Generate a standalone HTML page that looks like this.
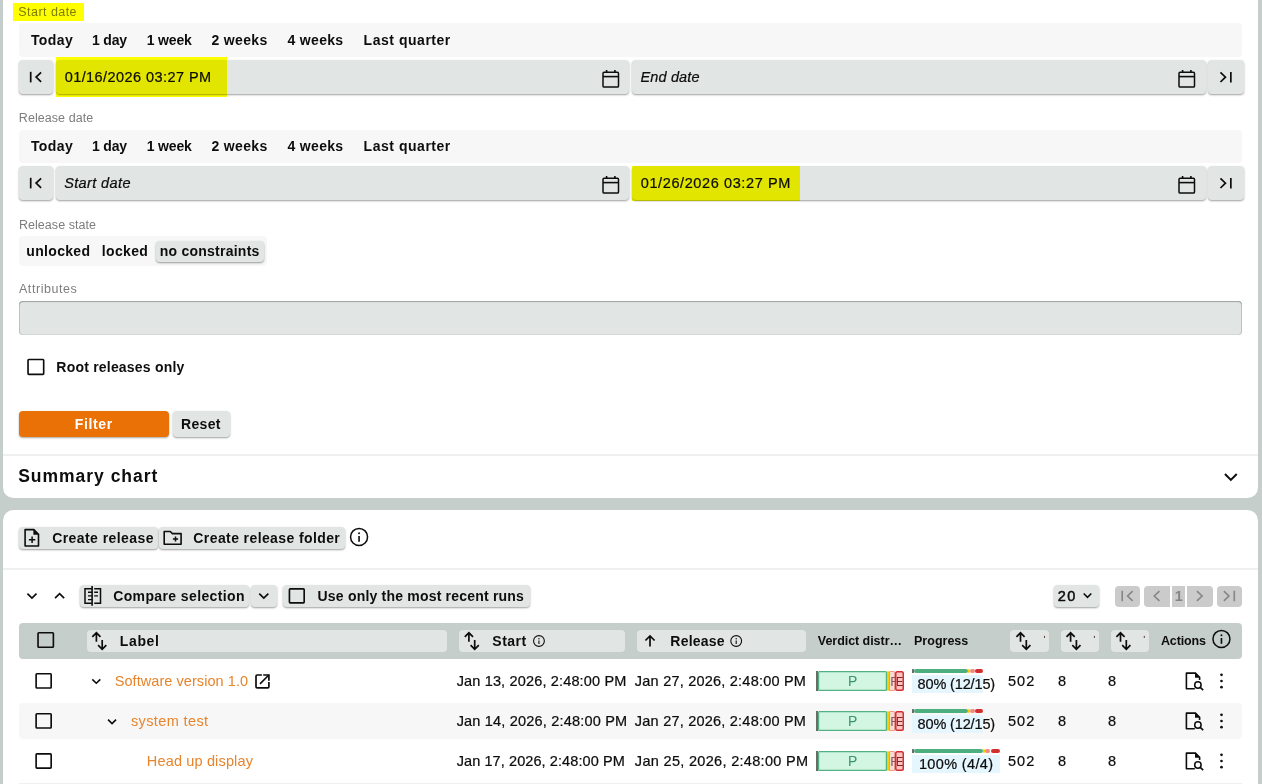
<!DOCTYPE html>
<html lang="en"><head><meta charset="utf-8"><title>Releases</title>
<style>
html,body{margin:0;padding:0}
body{width:1262px;height:784px;overflow:hidden;background:#c5cecb;font-family:"Liberation Sans", sans-serif;color:#0d0d0d;position:relative}
#root{position:absolute;left:0;top:0;width:1262px;height:784px;overflow:hidden}
#root div{position:absolute;box-sizing:border-box}
.card{background:#fff}
.tabbar{background:#f7f7f7;border-radius:4px}
.ctl{background:#e1e5e4;border-radius:4px;box-shadow:0 1px 2px rgba(0,0,0,.38)}
.cb{border:1.9px solid #0d0d0d;border-radius:2px;background:transparent}
#root .hl{background:#ffff00;mix-blend-mode:multiply}
.t{position:absolute;white-space:pre;line-height:1;font-family:"Liberation Sans", sans-serif}
svg{position:absolute;overflow:visible}
</style></head>
<body><div id="root">
<div class="card" style="left:3px;top:-20px;width:1255.00px;height:518.00px;border-radius:0 0 10.5px 10.5px"></div>
<div class="card" style="left:3px;top:510px;width:1255.00px;height:390.00px;border-radius:10.5px 10.5px 0 0"></div>
<div class="tabbar" style="left:19px;top:23px;width:1223.00px;height:34.00px;"></div>
<div class="ctl" style="left:19px;top:60.2px;width:34.30px;height:33.80px;"></div>
<div class="ctl" style="left:56px;top:60.2px;width:573.20px;height:33.80px;"></div>
<div class="ctl" style="left:632.2px;top:60.2px;width:573.60px;height:33.80px;"></div>
<div class="ctl" style="left:1208.3px;top:60.2px;width:35.40px;height:33.80px;"></div>
<div class="tabbar" style="left:19px;top:130px;width:1223.00px;height:33.00px;"></div>
<div class="ctl" style="left:19px;top:166.2px;width:34.30px;height:33.80px;"></div>
<div class="ctl" style="left:56px;top:166.2px;width:573.20px;height:33.80px;"></div>
<div class="ctl" style="left:632.2px;top:166.2px;width:573.60px;height:33.80px;"></div>
<div class="ctl" style="left:1208.3px;top:166.2px;width:35.40px;height:33.80px;"></div>
<div class="tabbar" style="left:19px;top:236px;width:248.00px;height:30.00px;"></div>
<div class="ctl" style="left:156px;top:240.5px;width:107.60px;height:21.60px;"></div>
<div class="" style="left:19px;top:301px;width:1223.00px;height:34.00px;background:#e1e5e4;border-radius:4px;box-shadow:inset 0 1px 1px rgba(0,0,0,.30), inset 1px 0 0 rgba(0,0,0,.13), inset -1px 0 0 rgba(0,0,0,.13), inset 0 -1px 0 rgba(0,0,0,.06)"></div>
<div class="" style="left:19px;top:411px;width:150.00px;height:26.00px;background:#ea7105;border-radius:4px;box-shadow:0 1px 2px rgba(0,0,0,.35)"></div>
<div class="ctl" style="left:172.6px;top:411px;width:57.00px;height:26.00px;"></div>
<div class="" style="left:3px;top:454.1px;width:1255.00px;height:1.50px;background:#edf0ef"></div>
<div class="" style="left:3px;top:568.1px;width:1255.00px;height:1.50px;background:#edf0ef"></div>
<div class="ctl" style="left:18.7px;top:527.3px;width:139.50px;height:22.00px;"></div>
<div class="ctl" style="left:159.3px;top:527.3px;width:186.20px;height:22.00px;"></div>
<div class="ctl" style="left:79.7px;top:585.2px;width:169.30px;height:22.00px;"></div>
<div class="ctl" style="left:250.7px;top:585.2px;width:26.30px;height:22.00px;"></div>
<div class="ctl" style="left:283.3px;top:585.2px;width:246.30px;height:22.00px;"></div>
<div class="ctl" style="left:1053.6px;top:585.2px;width:45.60px;height:21.80px;"></div>
<div class="" style="left:1115.2px;top:586.2px;width:24.70px;height:20.60px;background:#cbcbcb;border-radius:4px"></div>
<div class="" style="left:1144.3px;top:586.2px;width:25.50px;height:20.60px;background:#cbcbcb;border-radius:4px 0 0 4px"></div>
<div class="" style="left:1172.3px;top:586.2px;width:12.50px;height:20.60px;background:#cbcbcb;border-radius:0"></div>
<div class="" style="left:1187.3px;top:586.2px;width:25.50px;height:20.60px;background:#cbcbcb;border-radius:0 4px 4px 0"></div>
<div class="" style="left:1217.4px;top:586.2px;width:24.40px;height:20.60px;background:#cbcbcb;border-radius:4px"></div>
<div class="" style="left:19px;top:623px;width:1223.00px;height:36.00px;background:#c5cecb;border-radius:4px"></div>
<div class="" style="left:87px;top:630px;width:360.00px;height:22.00px;background:#e1e5e4;border-radius:4px"></div>
<div class="" style="left:459px;top:630px;width:166.00px;height:22.00px;background:#e1e5e4;border-radius:4px"></div>
<div class="" style="left:637px;top:630px;width:169.00px;height:22.00px;background:#e1e5e4;border-radius:4px"></div>
<div class="" style="left:1010px;top:630px;width:39.20px;height:22.00px;background:#e1e5e4;border-radius:4px"></div>
<div class="" style="left:1060.8px;top:630px;width:38.20px;height:22.00px;background:#e1e5e4;border-radius:4px"></div>
<div class="" style="left:1111px;top:630px;width:38.00px;height:22.00px;background:#e1e5e4;border-radius:4px"></div>
<div class="" style="left:19px;top:703px;width:1223.00px;height:36.00px;background:#f7f7f7;border-radius:4px"></div>
<div class="" style="left:19px;top:782.8px;width:1223.00px;height:1.20px;background:#f0f0f0"></div>
<div class="" style="left:816px;top:670.9px;width:2.20px;height:20.00px;background:#6a6a6a"></div>
<div class="" style="left:818.2px;top:670.9px;width:68.60px;height:20.00px;background:#d2f6e2;border-radius:1.5px;box-shadow:inset 0 0 0 1.2px #52b284"></div>
<div class="" style="left:887px;top:670.9px;width:2.20px;height:20.00px;background:#f7cf00;border-radius:1px"></div>
<div class="" style="left:889.3px;top:670.9px;width:5.50px;height:20.00px;background:#f5ddd6;border-radius:1.5px;box-shadow:inset 0 0 0 1px #f0978d;overflow:hidden"><span class="t" style="left:1.0px;top:3.8px;font-size:13px;color:#8a5560">F</span></div>
<div class="" style="left:894.7px;top:670.9px;width:9.20px;height:20.00px;background:#ffc6c6;border-radius:2.5px;box-shadow:inset 0 0 0 1.5px #d23030;overflow:hidden"><span class="t" style="left:1.6px;top:3.8px;font-size:13px;color:#8e1f1f;transform:scaleX(.84);transform-origin:0 0">E</span></div>
<div class="" style="left:912.3px;top:674.8px;width:70.90px;height:18.00px;background:#e5f6fe"></div>
<div class="" style="left:912.1px;top:669.1px;width:1.90px;height:3.70px;background:#6a6a6a;border-radius:.5px"></div>
<div class="" style="left:914.4px;top:669.1px;width:53.20px;height:3.70px;background:#4caf7d;border-radius:2px"></div>
<div class="" style="left:967.8px;top:669.1px;width:2.50px;height:3.70px;background:#f7d000;border-radius:1px"></div>
<div class="" style="left:970.1999999999999px;top:669.1px;width:4.70px;height:3.70px;background:#f08a80;border-radius:2px"></div>
<div class="" style="left:975.1px;top:669.1px;width:8.10px;height:3.70px;background:#d32f2f;border-radius:2px"></div>
<div class="" style="left:816px;top:710.9px;width:2.20px;height:20.00px;background:#6a6a6a"></div>
<div class="" style="left:818.2px;top:710.9px;width:68.60px;height:20.00px;background:#d2f6e2;border-radius:1.5px;box-shadow:inset 0 0 0 1.2px #52b284"></div>
<div class="" style="left:887px;top:710.9px;width:2.20px;height:20.00px;background:#f7cf00;border-radius:1px"></div>
<div class="" style="left:889.3px;top:710.9px;width:5.50px;height:20.00px;background:#f5ddd6;border-radius:1.5px;box-shadow:inset 0 0 0 1px #f0978d;overflow:hidden"><span class="t" style="left:1.0px;top:3.8px;font-size:13px;color:#8a5560">F</span></div>
<div class="" style="left:894.7px;top:710.9px;width:9.20px;height:20.00px;background:#ffc6c6;border-radius:2.5px;box-shadow:inset 0 0 0 1.5px #d23030;overflow:hidden"><span class="t" style="left:1.6px;top:3.8px;font-size:13px;color:#8e1f1f;transform:scaleX(.84);transform-origin:0 0">E</span></div>
<div class="" style="left:912.3px;top:714.8px;width:70.90px;height:18.00px;background:#e5f6fe"></div>
<div class="" style="left:912.1px;top:709.1px;width:1.90px;height:3.70px;background:#6a6a6a;border-radius:.5px"></div>
<div class="" style="left:914.4px;top:709.1px;width:53.20px;height:3.70px;background:#4caf7d;border-radius:2px"></div>
<div class="" style="left:967.8px;top:709.1px;width:2.50px;height:3.70px;background:#f7d000;border-radius:1px"></div>
<div class="" style="left:970.1999999999999px;top:709.1px;width:4.70px;height:3.70px;background:#f08a80;border-radius:2px"></div>
<div class="" style="left:975.1px;top:709.1px;width:8.10px;height:3.70px;background:#d32f2f;border-radius:2px"></div>
<div class="" style="left:816px;top:750.9px;width:2.20px;height:20.00px;background:#6a6a6a"></div>
<div class="" style="left:818.2px;top:750.9px;width:68.60px;height:20.00px;background:#d2f6e2;border-radius:1.5px;box-shadow:inset 0 0 0 1.2px #52b284"></div>
<div class="" style="left:887px;top:750.9px;width:2.20px;height:20.00px;background:#f7cf00;border-radius:1px"></div>
<div class="" style="left:889.3px;top:750.9px;width:5.50px;height:20.00px;background:#f5ddd6;border-radius:1.5px;box-shadow:inset 0 0 0 1px #f0978d;overflow:hidden"><span class="t" style="left:1.0px;top:3.8px;font-size:13px;color:#8a5560">F</span></div>
<div class="" style="left:894.7px;top:750.9px;width:9.20px;height:20.00px;background:#ffc6c6;border-radius:2.5px;box-shadow:inset 0 0 0 1.5px #d23030;overflow:hidden"><span class="t" style="left:1.6px;top:3.8px;font-size:13px;color:#8e1f1f;transform:scaleX(.84);transform-origin:0 0">E</span></div>
<div class="" style="left:912.3px;top:754.8px;width:87.70px;height:18.00px;background:#e5f6fe"></div>
<div class="" style="left:912.1px;top:749.1px;width:1.90px;height:3.70px;background:#6a6a6a;border-radius:.5px"></div>
<div class="" style="left:914.4px;top:749.1px;width:68.20px;height:3.70px;background:#4caf7d;border-radius:2px"></div>
<div class="" style="left:982.8px;top:749.1px;width:2.10px;height:3.70px;background:#f7d000;border-radius:1px"></div>
<div class="" style="left:984.8px;top:749.1px;width:5.60px;height:3.70px;background:#f08a80;border-radius:2px"></div>
<div class="" style="left:990.6px;top:749.1px;width:9.40px;height:3.70px;background:#d32f2f;border-radius:2px"></div>
<svg width="1262" height="784" viewBox="0 0 1262 784" style="left:0;top:0">
<path d="M30.7 71.8V82.39999999999999" fill="none" stroke="#0d0d0d" stroke-width="1.7" stroke-linecap="butt" stroke-linejoin="miter"/>
<path d="M41.1 72.3L36.1 77.1L41.1 81.89999999999999" fill="none" stroke="#0d0d0d" stroke-width="1.7" stroke-linecap="butt" stroke-linejoin="miter"/>
<path d="M1230.85 71.9V82.5" fill="none" stroke="#0d0d0d" stroke-width="1.7" stroke-linecap="butt" stroke-linejoin="miter"/>
<path d="M1220.4499999999998 72.4L1225.4499999999998 77.2L1220.4499999999998 82.0" fill="none" stroke="#0d0d0d" stroke-width="1.7" stroke-linecap="butt" stroke-linejoin="miter"/>
<rect x="603.0" y="72.3" width="15.5" height="14.8" rx="1.1" fill="none" stroke="#0d0d0d" stroke-width="1.5"/>
<path d="M603.0 76.6H618.5" fill="none" stroke="#0d0d0d" stroke-width="1.6" stroke-linecap="butt" stroke-linejoin="miter"/>
<path d="M606.6 70.1V72.4M614.9000000000001 70.1V72.4" fill="none" stroke="#0d0d0d" stroke-width="1.6" stroke-linecap="butt" stroke-linejoin="miter"/>
<rect x="1179.0" y="72.3" width="15.5" height="14.8" rx="1.1" fill="none" stroke="#0d0d0d" stroke-width="1.5"/>
<path d="M1179.0 76.6H1194.5" fill="none" stroke="#0d0d0d" stroke-width="1.6" stroke-linecap="butt" stroke-linejoin="miter"/>
<path d="M1182.6000000000001 70.1V72.4M1190.9 70.1V72.4" fill="none" stroke="#0d0d0d" stroke-width="1.6" stroke-linecap="butt" stroke-linejoin="miter"/>
<path d="M30.7 177.79999999999998V188.4" fill="none" stroke="#0d0d0d" stroke-width="1.7" stroke-linecap="butt" stroke-linejoin="miter"/>
<path d="M41.1 178.29999999999998L36.1 183.1L41.1 187.9" fill="none" stroke="#0d0d0d" stroke-width="1.7" stroke-linecap="butt" stroke-linejoin="miter"/>
<path d="M1230.85 177.89999999999998V188.5" fill="none" stroke="#0d0d0d" stroke-width="1.7" stroke-linecap="butt" stroke-linejoin="miter"/>
<path d="M1220.4499999999998 178.39999999999998L1225.4499999999998 183.2L1220.4499999999998 188.0" fill="none" stroke="#0d0d0d" stroke-width="1.7" stroke-linecap="butt" stroke-linejoin="miter"/>
<rect x="603.0" y="178.3" width="15.5" height="14.8" rx="1.1" fill="none" stroke="#0d0d0d" stroke-width="1.5"/>
<path d="M603.0 182.6H618.5" fill="none" stroke="#0d0d0d" stroke-width="1.6" stroke-linecap="butt" stroke-linejoin="miter"/>
<path d="M606.6 176.1V178.4M614.9000000000001 176.1V178.4" fill="none" stroke="#0d0d0d" stroke-width="1.6" stroke-linecap="butt" stroke-linejoin="miter"/>
<rect x="1179.0" y="178.3" width="15.5" height="14.8" rx="1.1" fill="none" stroke="#0d0d0d" stroke-width="1.5"/>
<path d="M1179.0 182.6H1194.5" fill="none" stroke="#0d0d0d" stroke-width="1.6" stroke-linecap="butt" stroke-linejoin="miter"/>
<path d="M1182.6000000000001 176.1V178.4M1190.9 176.1V178.4" fill="none" stroke="#0d0d0d" stroke-width="1.6" stroke-linecap="butt" stroke-linejoin="miter"/>
<path d="M1224.9499999999998 473.95L1230.85 479.84999999999997L1236.75 473.95" fill="none" stroke="#0d0d0d" stroke-width="2.0" stroke-linecap="butt" stroke-linejoin="miter"/>
<path d="M25.1 529.6H33.8L38.5 534.3V546H25.1Z" fill="none" stroke="#0d0d0d" stroke-width="1.6" stroke-linecap="butt" stroke-linejoin="round"/>
<path d="M33.4 528.9L39.2 534.7H33.4Z" fill="#0d0d0d"/>
<path d="M32.1 536.5V542.9M28.9 539.7H35.3" fill="none" stroke="#0d0d0d" stroke-width="1.5" stroke-linecap="butt" stroke-linejoin="miter"/>
<path d="M164.2 531.5H170.3L172.4 533.6H181.1V544.2H164.2Z" fill="none" stroke="#0d0d0d" stroke-width="1.6" stroke-linecap="butt" stroke-linejoin="round"/>
<path d="M175.5 536.4V541.6M172.9 539H178.1" fill="none" stroke="#0d0d0d" stroke-width="1.5" stroke-linecap="butt" stroke-linejoin="miter"/>
<circle cx="359.06" cy="536.9" r="8.5" fill="none" stroke="#0d0d0d" stroke-width="1.5"/>
<path d="M359.06 535.9783132530121V541.8156626506023" fill="none" stroke="#0d0d0d" stroke-width="1.6385542168674698" stroke-linecap="butt" stroke-linejoin="miter"/>
<circle cx="359.06" cy="533.3156626506023" r="0.97289156626506" fill="#0d0d0d" stroke="none" stroke-width="0"/>
<circle cx="1221.45" cy="638.9" r="8.5" fill="none" stroke="#0d0d0d" stroke-width="1.5"/>
<path d="M1221.45 637.9783132530121V643.8156626506023" fill="none" stroke="#0d0d0d" stroke-width="1.6385542168674698" stroke-linecap="butt" stroke-linejoin="miter"/>
<circle cx="1221.45" cy="635.3156626506023" r="0.97289156626506" fill="#0d0d0d" stroke="none" stroke-width="0"/>
<circle cx="538.95" cy="641.0" r="5.4" fill="none" stroke="#0d0d0d" stroke-width="1.1"/>
<path d="M538.95 640.4144578313253V644.122891566265" fill="none" stroke="#0d0d0d" stroke-width="1.1" stroke-linecap="butt" stroke-linejoin="miter"/>
<circle cx="538.95" cy="638.722891566265" r="0.7" fill="#0d0d0d" stroke="none" stroke-width="0"/>
<circle cx="736.2" cy="641.0" r="5.4" fill="none" stroke="#0d0d0d" stroke-width="1.1"/>
<path d="M736.2 640.4144578313253V644.122891566265" fill="none" stroke="#0d0d0d" stroke-width="1.1" stroke-linecap="butt" stroke-linejoin="miter"/>
<circle cx="736.2" cy="638.722891566265" r="0.7" fill="#0d0d0d" stroke="none" stroke-width="0"/>
<path d="M27.4 593.6L31.95 598.1L36.5 593.6" fill="none" stroke="#0d0d0d" stroke-width="1.7" stroke-linecap="butt" stroke-linejoin="miter"/>
<path d="M55.050000000000004 598.1L59.6 593.6L64.15 598.1" fill="none" stroke="#0d0d0d" stroke-width="1.7" stroke-linecap="butt" stroke-linejoin="miter"/>
<path d="M259.25 593.6L263.8 598.1L268.35 593.6" fill="none" stroke="#0d0d0d" stroke-width="1.7" stroke-linecap="butt" stroke-linejoin="miter"/>
<path d="M1083.7 593.5L1087.5 597.3L1091.3 593.5" fill="none" stroke="#0d0d0d" stroke-width="1.6" stroke-linecap="butt" stroke-linejoin="miter"/>
<path d="M92.1 586.1V605.7" fill="none" stroke="#0d0d0d" stroke-width="1.6" stroke-linecap="butt" stroke-linejoin="miter"/>
<path d="M92.1 588.7H85V603.2H92.1" fill="none" stroke="#0d0d0d" stroke-width="1.5" stroke-linecap="butt" stroke-linejoin="miter"/>
<path d="M94.2 588.7H100.5V603.2H94.2" fill="none" stroke="#0d0d0d" stroke-width="1.5" stroke-linecap="butt" stroke-linejoin="miter"/>
<path d="M88 592.2H92.1M88 595.9H92.1M88 599.6H92.1M94.2 592.2H98M94.2 595.9H98" fill="none" stroke="#0d0d0d" stroke-width="1.4" stroke-linecap="butt" stroke-linejoin="miter"/>
<path d="M1122.2 590.7V601.3" fill="none" stroke="#858585" stroke-width="1.6" stroke-linecap="butt" stroke-linejoin="miter"/>
<path d="M1132.6000000000001 591.2L1127.6000000000001 596L1132.6000000000001 600.8" fill="none" stroke="#858585" stroke-width="1.6" stroke-linecap="butt" stroke-linejoin="miter"/>
<path d="M1159.4499999999998 591.2L1154.25 596L1159.4499999999998 600.8" fill="none" stroke="#858585" stroke-width="1.6" stroke-linecap="butt" stroke-linejoin="miter"/>
<path d="M1196.9 591.2L1202.1 596L1196.9 600.8" fill="none" stroke="#858585" stroke-width="1.6" stroke-linecap="butt" stroke-linejoin="miter"/>
<path d="M1234.3 590.7V601.3" fill="none" stroke="#858585" stroke-width="1.6" stroke-linecap="butt" stroke-linejoin="miter"/>
<path d="M1223.8999999999999 591.2L1228.8999999999999 596L1223.8999999999999 600.8" fill="none" stroke="#858585" stroke-width="1.6" stroke-linecap="butt" stroke-linejoin="miter"/>
<path d="M96.4 641.7V633.2M92.3 636.9L96.4 632.8L100.5 636.9" fill="none" stroke="#0d0d0d" stroke-width="1.7" stroke-linecap="butt" stroke-linejoin="miter"/>
<path d="M102.2 640.1V648.9M98.1 645.2L102.2 649.3L106.3 645.2" fill="none" stroke="#0d0d0d" stroke-width="1.7" stroke-linecap="butt" stroke-linejoin="miter"/>
<path d="M468.9 641.7V633.2M464.8 636.9L468.9 632.8L473.0 636.9" fill="none" stroke="#0d0d0d" stroke-width="1.7" stroke-linecap="butt" stroke-linejoin="miter"/>
<path d="M474.7 640.1V648.9M470.6 645.2L474.7 649.3L478.8 645.2" fill="none" stroke="#0d0d0d" stroke-width="1.7" stroke-linecap="butt" stroke-linejoin="miter"/>
<path d="M1020.5 641.7V633.2M1016.4 636.9L1020.5 632.8L1024.6 636.9" fill="none" stroke="#0d0d0d" stroke-width="1.7" stroke-linecap="butt" stroke-linejoin="miter"/>
<path d="M1026.3 640.1V648.9M1022.2 645.2L1026.3 649.3L1030.4 645.2" fill="none" stroke="#0d0d0d" stroke-width="1.7" stroke-linecap="butt" stroke-linejoin="miter"/>
<path d="M1070.6000000000001 641.7V633.2M1066.5 636.9L1070.6000000000001 632.8L1074.7 636.9" fill="none" stroke="#0d0d0d" stroke-width="1.7" stroke-linecap="butt" stroke-linejoin="miter"/>
<path d="M1076.4 640.1V648.9M1072.3 645.2L1076.4 649.3L1080.5 645.2" fill="none" stroke="#0d0d0d" stroke-width="1.7" stroke-linecap="butt" stroke-linejoin="miter"/>
<path d="M1120.5 641.7V633.2M1116.3999999999999 636.9L1120.5 632.8L1124.6 636.9" fill="none" stroke="#0d0d0d" stroke-width="1.7" stroke-linecap="butt" stroke-linejoin="miter"/>
<path d="M1126.3 640.1V648.9M1122.1999999999998 645.2L1126.3 649.3L1130.3999999999999 645.2" fill="none" stroke="#0d0d0d" stroke-width="1.7" stroke-linecap="butt" stroke-linejoin="miter"/>
<rect x="1044.0" y="635.9" width="1" height="2" fill="#5a3a2a"/>
<rect x="1093.9" y="635.9" width="1" height="2" fill="#5a3a2a"/>
<rect x="1143.8" y="635.9" width="1" height="2" fill="#5a3a2a"/>
<path d="M650 646.4V636M645.4 640.5L650 635.9L654.6 640.5" fill="none" stroke="#0d0d0d" stroke-width="1.7" stroke-linecap="butt" stroke-linejoin="miter"/>
<path d="M92.3 679.3499999999999L96.3 683.25L100.3 679.3499999999999" fill="none" stroke="#0d0d0d" stroke-width="1.6" stroke-linecap="butt" stroke-linejoin="miter"/>
<path d="M108.05 719.65L112.05 723.5500000000001L116.05 719.65" fill="none" stroke="#0d0d0d" stroke-width="1.6" stroke-linecap="butt" stroke-linejoin="miter"/>
<path d="M261.9 675H257.2Q256 675 256 676.2V686.7Q256 687.9 257.2 687.9H267.7Q268.9 687.9 268.9 686.7V682.1" fill="none" stroke="#0d0d0d" stroke-width="1.7" stroke-linecap="butt" stroke-linejoin="miter"/>
<path d="M263.2 675H268.9V680.7" fill="none" stroke="#0d0d0d" stroke-width="1.7" stroke-linecap="butt" stroke-linejoin="miter"/>
<path d="M260 683.9L268.6 675.3" fill="none" stroke="#0d0d0d" stroke-width="1.6" stroke-linecap="butt" stroke-linejoin="miter"/>
<path d="M1194.8 688.8000000000001H1186.4V673.0999999999999H1195.4L1199.6 677.2V680" fill="none" stroke="#0d0d0d" stroke-width="1.6" stroke-linecap="butt" stroke-linejoin="round"/>
<path d="M1195 672.2L1200.4 677.8H1195Z" fill="#0d0d0d"/>
<circle cx="1197.9" cy="685" r="3.2" fill="none" stroke="#0d0d0d" stroke-width="1.5"/>
<path d="M1200.2 687.3L1203.2 690.2" fill="none" stroke="#0d0d0d" stroke-width="1.6" stroke-linecap="butt" stroke-linejoin="miter"/>
<circle cx="1221.5" cy="674.8" r="1.35" fill="#0d0d0d" stroke="none" stroke-width="0"/>
<circle cx="1221.5" cy="681" r="1.35" fill="#0d0d0d" stroke="none" stroke-width="0"/>
<circle cx="1221.5" cy="687.2" r="1.35" fill="#0d0d0d" stroke="none" stroke-width="0"/>
<path d="M1194.8 728.8000000000001H1186.4V713.0999999999999H1195.4L1199.6 717.2V720" fill="none" stroke="#0d0d0d" stroke-width="1.6" stroke-linecap="butt" stroke-linejoin="round"/>
<path d="M1195 712.2L1200.4 717.8H1195Z" fill="#0d0d0d"/>
<circle cx="1197.9" cy="725" r="3.2" fill="none" stroke="#0d0d0d" stroke-width="1.5"/>
<path d="M1200.2 727.3L1203.2 730.2" fill="none" stroke="#0d0d0d" stroke-width="1.6" stroke-linecap="butt" stroke-linejoin="miter"/>
<circle cx="1221.5" cy="714.8" r="1.35" fill="#0d0d0d" stroke="none" stroke-width="0"/>
<circle cx="1221.5" cy="721" r="1.35" fill="#0d0d0d" stroke="none" stroke-width="0"/>
<circle cx="1221.5" cy="727.2" r="1.35" fill="#0d0d0d" stroke="none" stroke-width="0"/>
<path d="M1194.8 768.8000000000001H1186.4V753.0999999999999H1195.4L1199.6 757.2V760" fill="none" stroke="#0d0d0d" stroke-width="1.6" stroke-linecap="butt" stroke-linejoin="round"/>
<path d="M1195 752.2L1200.4 757.8H1195Z" fill="#0d0d0d"/>
<circle cx="1197.9" cy="765" r="3.2" fill="none" stroke="#0d0d0d" stroke-width="1.5"/>
<path d="M1200.2 767.3L1203.2 770.2" fill="none" stroke="#0d0d0d" stroke-width="1.6" stroke-linecap="butt" stroke-linejoin="miter"/>
<circle cx="1221.5" cy="754.8" r="1.35" fill="#0d0d0d" stroke="none" stroke-width="0"/>
<circle cx="1221.5" cy="761" r="1.35" fill="#0d0d0d" stroke="none" stroke-width="0"/>
<circle cx="1221.5" cy="767.2" r="1.35" fill="#0d0d0d" stroke="none" stroke-width="0"/>
<rect x="28.03" y="359.52" width="15.65" height="14.85" rx="0.8" fill="none" stroke="#0d0d0d" stroke-width="1.65"/>
<rect x="38.03" y="632.73" width="15.35" height="14.55" rx="0.8" fill="none" stroke="#0d0d0d" stroke-width="1.65"/>
<rect x="289.43" y="588.88" width="14.75" height="13.95" rx="0.8" fill="none" stroke="#0d0d0d" stroke-width="1.65"/>
<rect x="36.12" y="673.73" width="15.05" height="14.25" rx="0.8" fill="none" stroke="#0d0d0d" stroke-width="1.65"/>
<rect x="36.12" y="713.73" width="15.05" height="14.25" rx="0.8" fill="none" stroke="#0d0d0d" stroke-width="1.65"/>
<rect x="36.12" y="753.88" width="15.05" height="14.25" rx="0.8" fill="none" stroke="#0d0d0d" stroke-width="1.65"/>
</svg>
<span class="t" style="left:18.34px;top:5.62px;font-size:12.5px;letter-spacing:0.447px;color:#7d7d7d">Start date</span>
<span class="t" style="left:30.97px;top:32.75px;font-size:14px;letter-spacing:0.389px;font-weight:700">Today</span>
<span class="t" style="left:92.07px;top:32.75px;font-size:14px;letter-spacing:-0.188px;font-weight:700">1 day</span>
<span class="t" style="left:146.67px;top:32.75px;font-size:14px;letter-spacing:-0.136px;font-weight:700">1 week</span>
<span class="t" style="left:211.47px;top:32.75px;font-size:14px;letter-spacing:0.340px;font-weight:700">2 weeks</span>
<span class="t" style="left:287.57px;top:32.75px;font-size:14px;letter-spacing:0.307px;font-weight:700">4 weeks</span>
<span class="t" style="left:363.57px;top:32.75px;font-size:14px;letter-spacing:0.531px;font-weight:700">Last quarter</span>
<span class="t" style="left:30.97px;top:138.75px;font-size:14px;letter-spacing:0.389px;font-weight:700">Today</span>
<span class="t" style="left:92.07px;top:138.75px;font-size:14px;letter-spacing:-0.188px;font-weight:700">1 day</span>
<span class="t" style="left:146.67px;top:138.75px;font-size:14px;letter-spacing:-0.136px;font-weight:700">1 week</span>
<span class="t" style="left:211.47px;top:138.75px;font-size:14px;letter-spacing:0.340px;font-weight:700">2 weeks</span>
<span class="t" style="left:287.57px;top:138.75px;font-size:14px;letter-spacing:0.307px;font-weight:700">4 weeks</span>
<span class="t" style="left:363.57px;top:138.75px;font-size:14px;letter-spacing:0.531px;font-weight:700">Last quarter</span>
<span class="t" style="left:64.65px;top:69.73px;font-size:14.5px;letter-spacing:0.437px;-webkit-text-stroke:0.22px #0d0d0d">01/16/2026 03:27 PM</span>
<span class="t" style="left:640.55px;top:69.53px;font-size:14.5px;letter-spacing:0.135px;font-style:italic;-webkit-text-stroke:0.22px #0d0d0d">End date</span>
<span class="t" style="left:18.84px;top:111.62px;font-size:12.5px;letter-spacing:0.059px;color:#7d7d7d">Release date</span>
<span class="t" style="left:64.15px;top:175.73px;font-size:14.5px;letter-spacing:0.381px;font-style:italic;-webkit-text-stroke:0.22px #0d0d0d">Start date</span>
<span class="t" style="left:640.75px;top:175.73px;font-size:14.5px;letter-spacing:0.604px;-webkit-text-stroke:0.22px #0d0d0d">01/26/2026 03:27 PM</span>
<span class="t" style="left:18.94px;top:219.42px;font-size:12.5px;letter-spacing:0.049px;color:#7d7d7d">Release state</span>
<span class="t" style="left:26.37px;top:244.15px;font-size:14px;letter-spacing:0.313px;font-weight:700">unlocked</span>
<span class="t" style="left:101.87px;top:244.15px;font-size:14px;letter-spacing:0.340px;font-weight:700">locked</span>
<span class="t" style="left:159.77px;top:244.15px;font-size:14px;letter-spacing:0.238px;font-weight:700">no constraints</span>
<span class="t" style="left:18.94px;top:283.42px;font-size:12.5px;letter-spacing:0.568px;color:#7d7d7d">Attributes</span>
<span class="t" style="left:56.37px;top:360.35px;font-size:14px;letter-spacing:0.204px;font-weight:700">Root releases only</span>
<span class="t" style="left:74.77px;top:416.95px;font-size:14px;letter-spacing:0.645px;font-weight:700;color:#fff">Filter</span>
<span class="t" style="left:181.07px;top:416.95px;font-size:14px;letter-spacing:0.325px;font-weight:700">Reset</span>
<span class="t" style="left:18.21px;top:467.79px;font-size:17.5px;letter-spacing:0.979px;font-weight:700">Summary chart</span>
<span class="t" style="left:52.17px;top:531.15px;font-size:14px;letter-spacing:0.432px;font-weight:700">Create release</span>
<span class="t" style="left:193.37px;top:531.15px;font-size:14px;letter-spacing:0.396px;font-weight:700">Create release folder</span>
<span class="t" style="left:113.17px;top:589.15px;font-size:14px;letter-spacing:0.387px;font-weight:700">Compare selection</span>
<span class="t" style="left:317.57px;top:589.15px;font-size:14px;letter-spacing:0.198px;font-weight:700">Use only the most recent runs</span>
<span class="t" style="left:1057.85px;top:588.73px;font-size:14.5px;letter-spacing:1.364px;-webkit-text-stroke:0.5px #0d0d0d">20</span>
<span class="t" style="left:1174.65px;top:588.73px;font-size:14.5px;letter-spacing:0.000px;font-weight:700;color:#858585">1</span>
<span class="t" style="left:119.87px;top:634.25px;font-size:14px;letter-spacing:0.595px;font-weight:700">Label</span>
<span class="t" style="left:492.37px;top:634.25px;font-size:14px;letter-spacing:0.463px;font-weight:700">Start</span>
<span class="t" style="left:670.37px;top:634.25px;font-size:14px;letter-spacing:0.187px;font-weight:700">Release</span>
<span class="t" style="left:817.84px;top:634.62px;font-size:12.5px;letter-spacing:-0.048px;font-weight:700">Verdict distr…</span>
<span class="t" style="left:914.04px;top:634.62px;font-size:12.5px;letter-spacing:0.003px;font-weight:700">Progress</span>
<span class="t" style="left:1160.94px;top:634.62px;font-size:12.5px;letter-spacing:-0.120px;font-weight:700">Actions</span>
<span class="t" style="left:114.75px;top:673.63px;font-size:14.5px;letter-spacing:0.059px;color:#e8842c">Software version 1.0</span>
<span class="t" style="left:456.65px;top:673.63px;font-size:14.5px;letter-spacing:0.158px;-webkit-text-stroke:0.22px #0d0d0d">Jan 13, 2026, 2:48:00 PM</span>
<span class="t" style="left:634.85px;top:673.63px;font-size:14.5px;letter-spacing:0.219px;-webkit-text-stroke:0.22px #0d0d0d">Jan 27, 2026, 2:48:00 PM</span>
<span class="t" style="left:847.97px;top:674.25px;font-size:14px;letter-spacing:0.000px;color:#3a9468">P</span>
<span class="t" style="left:917.55px;top:677.03px;font-size:14.5px;letter-spacing:-0.139px;-webkit-text-stroke:0.22px #0d0d0d">80% (12/15)</span>
<span class="t" style="left:1008.05px;top:673.63px;font-size:14.5px;letter-spacing:1.001px;-webkit-text-stroke:0.22px #0d0d0d">502</span>
<span class="t" style="left:1058.05px;top:673.63px;font-size:14.5px;letter-spacing:0.000px;-webkit-text-stroke:0.22px #0d0d0d">8</span>
<span class="t" style="left:1107.95px;top:673.63px;font-size:14.5px;letter-spacing:0.000px;-webkit-text-stroke:0.22px #0d0d0d">8</span>
<span class="t" style="left:130.95px;top:713.63px;font-size:14.5px;letter-spacing:0.388px;color:#e8842c">system test</span>
<span class="t" style="left:456.65px;top:713.63px;font-size:14.5px;letter-spacing:0.192px;-webkit-text-stroke:0.22px #0d0d0d">Jan 14, 2026, 2:48:00 PM</span>
<span class="t" style="left:634.85px;top:713.63px;font-size:14.5px;letter-spacing:0.219px;-webkit-text-stroke:0.22px #0d0d0d">Jan 27, 2026, 2:48:00 PM</span>
<span class="t" style="left:847.97px;top:714.25px;font-size:14px;letter-spacing:0.000px;color:#3a9468">P</span>
<span class="t" style="left:917.55px;top:717.03px;font-size:14.5px;letter-spacing:-0.139px;-webkit-text-stroke:0.22px #0d0d0d">80% (12/15)</span>
<span class="t" style="left:1008.05px;top:713.63px;font-size:14.5px;letter-spacing:1.001px;-webkit-text-stroke:0.22px #0d0d0d">502</span>
<span class="t" style="left:1058.05px;top:713.63px;font-size:14.5px;letter-spacing:0.000px;-webkit-text-stroke:0.22px #0d0d0d">8</span>
<span class="t" style="left:1107.95px;top:713.63px;font-size:14.5px;letter-spacing:0.000px;-webkit-text-stroke:0.22px #0d0d0d">8</span>
<span class="t" style="left:146.85px;top:753.63px;font-size:14.5px;letter-spacing:0.150px;color:#e8842c">Head up display</span>
<span class="t" style="left:456.65px;top:753.63px;font-size:14.5px;letter-spacing:0.092px;-webkit-text-stroke:0.22px #0d0d0d">Jan 17, 2026, 2:48:00 PM</span>
<span class="t" style="left:634.85px;top:753.63px;font-size:14.5px;letter-spacing:0.314px;-webkit-text-stroke:0.22px #0d0d0d">Jan 25, 2026, 2:48:00 PM</span>
<span class="t" style="left:847.97px;top:754.25px;font-size:14px;letter-spacing:0.000px;color:#3a9468">P</span>
<span class="t" style="left:918.95px;top:757.03px;font-size:14.5px;letter-spacing:0.352px;-webkit-text-stroke:0.22px #0d0d0d">100% (4/4)</span>
<span class="t" style="left:1008.05px;top:753.63px;font-size:14.5px;letter-spacing:1.001px;-webkit-text-stroke:0.22px #0d0d0d">502</span>
<span class="t" style="left:1058.05px;top:753.63px;font-size:14.5px;letter-spacing:0.000px;-webkit-text-stroke:0.22px #0d0d0d">8</span>
<span class="t" style="left:1107.95px;top:753.63px;font-size:14.5px;letter-spacing:0.000px;-webkit-text-stroke:0.22px #0d0d0d">8</span>
<div class="hl" style="left:13px;top:3px;width:71px;height:18px"></div>
<div class="hl" style="left:56px;top:57px;width:170.8px;height:39.5px"></div>
<div class="hl" style="left:632.2px;top:166.2px;width:167.8px;height:34.4px"></div>
</div></body></html>
